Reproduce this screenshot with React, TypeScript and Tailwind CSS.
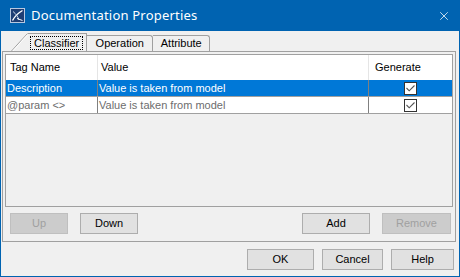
import { X } from 'lucide-react';

const rows = [
  { tag: 'Description', value: 'Value is taken from model', selected: true },
  { tag: '@param <>', value: 'Value is taken from model', selected: false },
];

function Check() {
  return (
    <div className="w-[13px] h-[13px] bg-white border border-[#333] flex items-center justify-center">
      <svg width="11" height="11" viewBox="0 0 11 11">
        <path d="M1.5 5 L4.2 7.8 L9.5 2.5" fill="none" stroke="#555" strokeWidth="1.1" />
      </svg>
    </div>
  );
}

function Btn({ label, disabled, w }: { label: string; disabled?: boolean; w: string }) {
  return (
    <button
      className={
        'h-[21px] border text-[11px] flex items-center justify-center ' +
        w +
        (disabled ? ' bg-[#cccccc] border-[#bfbfbf] text-[#a0a0a0]' : ' bg-[#e1e1e1] border-[#adadad] text-black')
      }
    >
      {label}
    </button>
  );
}

export default function App() {
  return (
    <div
      className="w-[460px] h-[277px] flex flex-col bg-[#f0f0f0] border-x border-b border-[#0063b1] overflow-hidden"
      style={{ fontFamily: '"Liberation Sans", Arial, sans-serif' }}
    >
      {/* title bar */}
      <div className="h-[31px] shrink-0 bg-[#0063b1] flex items-center pl-[10px] pr-[9px] -mx-px">
        <svg width="15" height="15" viewBox="0 0 15 15" className="shrink-0">
          <rect x="0.5" y="0.5" width="14" height="14" fill="#1f3e74" stroke="#b8c8e0" />
          <path d="M2.5 12.5 C5 8, 8 5, 12.5 2.5" stroke="#fff" strokeWidth="1.4" fill="none" />
          <path d="M3 3.5 C6 6, 8 8.5, 9 12" stroke="#c8d4e8" strokeWidth="1" fill="none" />
          <path d="M7 10.5 L12.5 12.5" stroke="#fff" strokeWidth="1" fill="none" />
        </svg>
        <span
          className="ml-[6px] text-white text-[13px] tracking-[0.2px]"
          style={{ fontFamily: '"Noto Sans", sans-serif' }}
        >
          Documentation Properties
        </span>
        <X className="ml-auto text-white" size={14} strokeWidth={1.3} />
      </div>

      {/* tabs */}
      <div className="h-[19px] shrink-0 flex items-end pl-[10px] mt-[1px] text-[11px]">
        <div className="flex h-[18px]">
          <svg width="17" height="18" viewBox="0 0 17 18" className="shrink-0">
            <path d="M0.5 18 L16.5 0.5" stroke="#a0a0a0" fill="none" />
            <path d="M1.8 18 L16.5 1.8" stroke="#fff" fill="none" />
          </svg>
          <div className="border-t border-r border-[#a0a0a0] flex items-center pl-[2px] pr-[3px]">
            <span className="border border-dotted border-black px-[3px] leading-[12px] h-[14px]">Classifier</span>
          </div>
        </div>
        <div className="h-[16px] w-[66px] border-t border-r border-[#a0a0a0] rounded-tr-[3px] flex items-center justify-center">
          Operation
        </div>
        <div className="h-[16px] w-[57px] border-t border-r border-[#a0a0a0] rounded-tr-[3px] flex items-center justify-center">
          Attribute
        </div>
      </div>

      {/* panel */}
      <div className="ml-px mr-[3px] h-[191px] shrink-0 border border-[#a0a0a0] p-[2px] flex flex-col">
        <div className="h-[153px] shrink-0 border border-[#a0a0a0] bg-[#f0f0f0] flex flex-col text-[11px]">
          <div className="h-[25px] bg-white flex items-center text-black">
            <div className="w-[92px] h-full border-r border-[#e5e5e5] flex items-center pl-[4px]">Tag Name</div>
            <div className="w-[271px] h-full border-r border-[#e5e5e5] flex items-center pl-[3px]">Value</div>
            <div className="flex-1 flex items-center pl-[6px]">Generate</div>
          </div>
          {rows.map((r) => (
            <div
              key={r.tag}
              className={
                'h-[17px] flex items-center border-b border-[#a0a0a0] ' +
                (r.selected ? 'bg-[#0078d7] text-white' : 'bg-white text-[#6d6d6d]')
              }
            >
              <div className="w-[92px] h-full border-r border-[#808080] flex items-center pl-px">{r.tag}</div>
              <div className="w-[271px] h-full border-r border-[#808080] flex items-center pl-px">{r.value}</div>
              <div className="flex-1 h-full flex items-center justify-center">
                <Check />
              </div>
            </div>
          ))}
        </div>
        <div className="flex items-center mt-[6px] pl-[5px] pr-[2px] gap-[12px]">
          <Btn label="Up" disabled w="w-[58px]" />
          <Btn label="Down" w="w-[58px]" />
          <div className="flex-1" />
          <Btn label="Add" w="w-[68px]" />
          <Btn label="Remove" disabled w="w-[69px]" />
        </div>
      </div>

      {/* footer */}
      <div className="flex justify-end gap-[8px] mt-[7px] pr-[5px]">
        <Btn label="OK" w="w-[67px]" />
        <Btn label="Cancel" w="w-[61px]" />
        <Btn label="Help" w="w-[63px]" />
      </div>
    </div>
  );
}
